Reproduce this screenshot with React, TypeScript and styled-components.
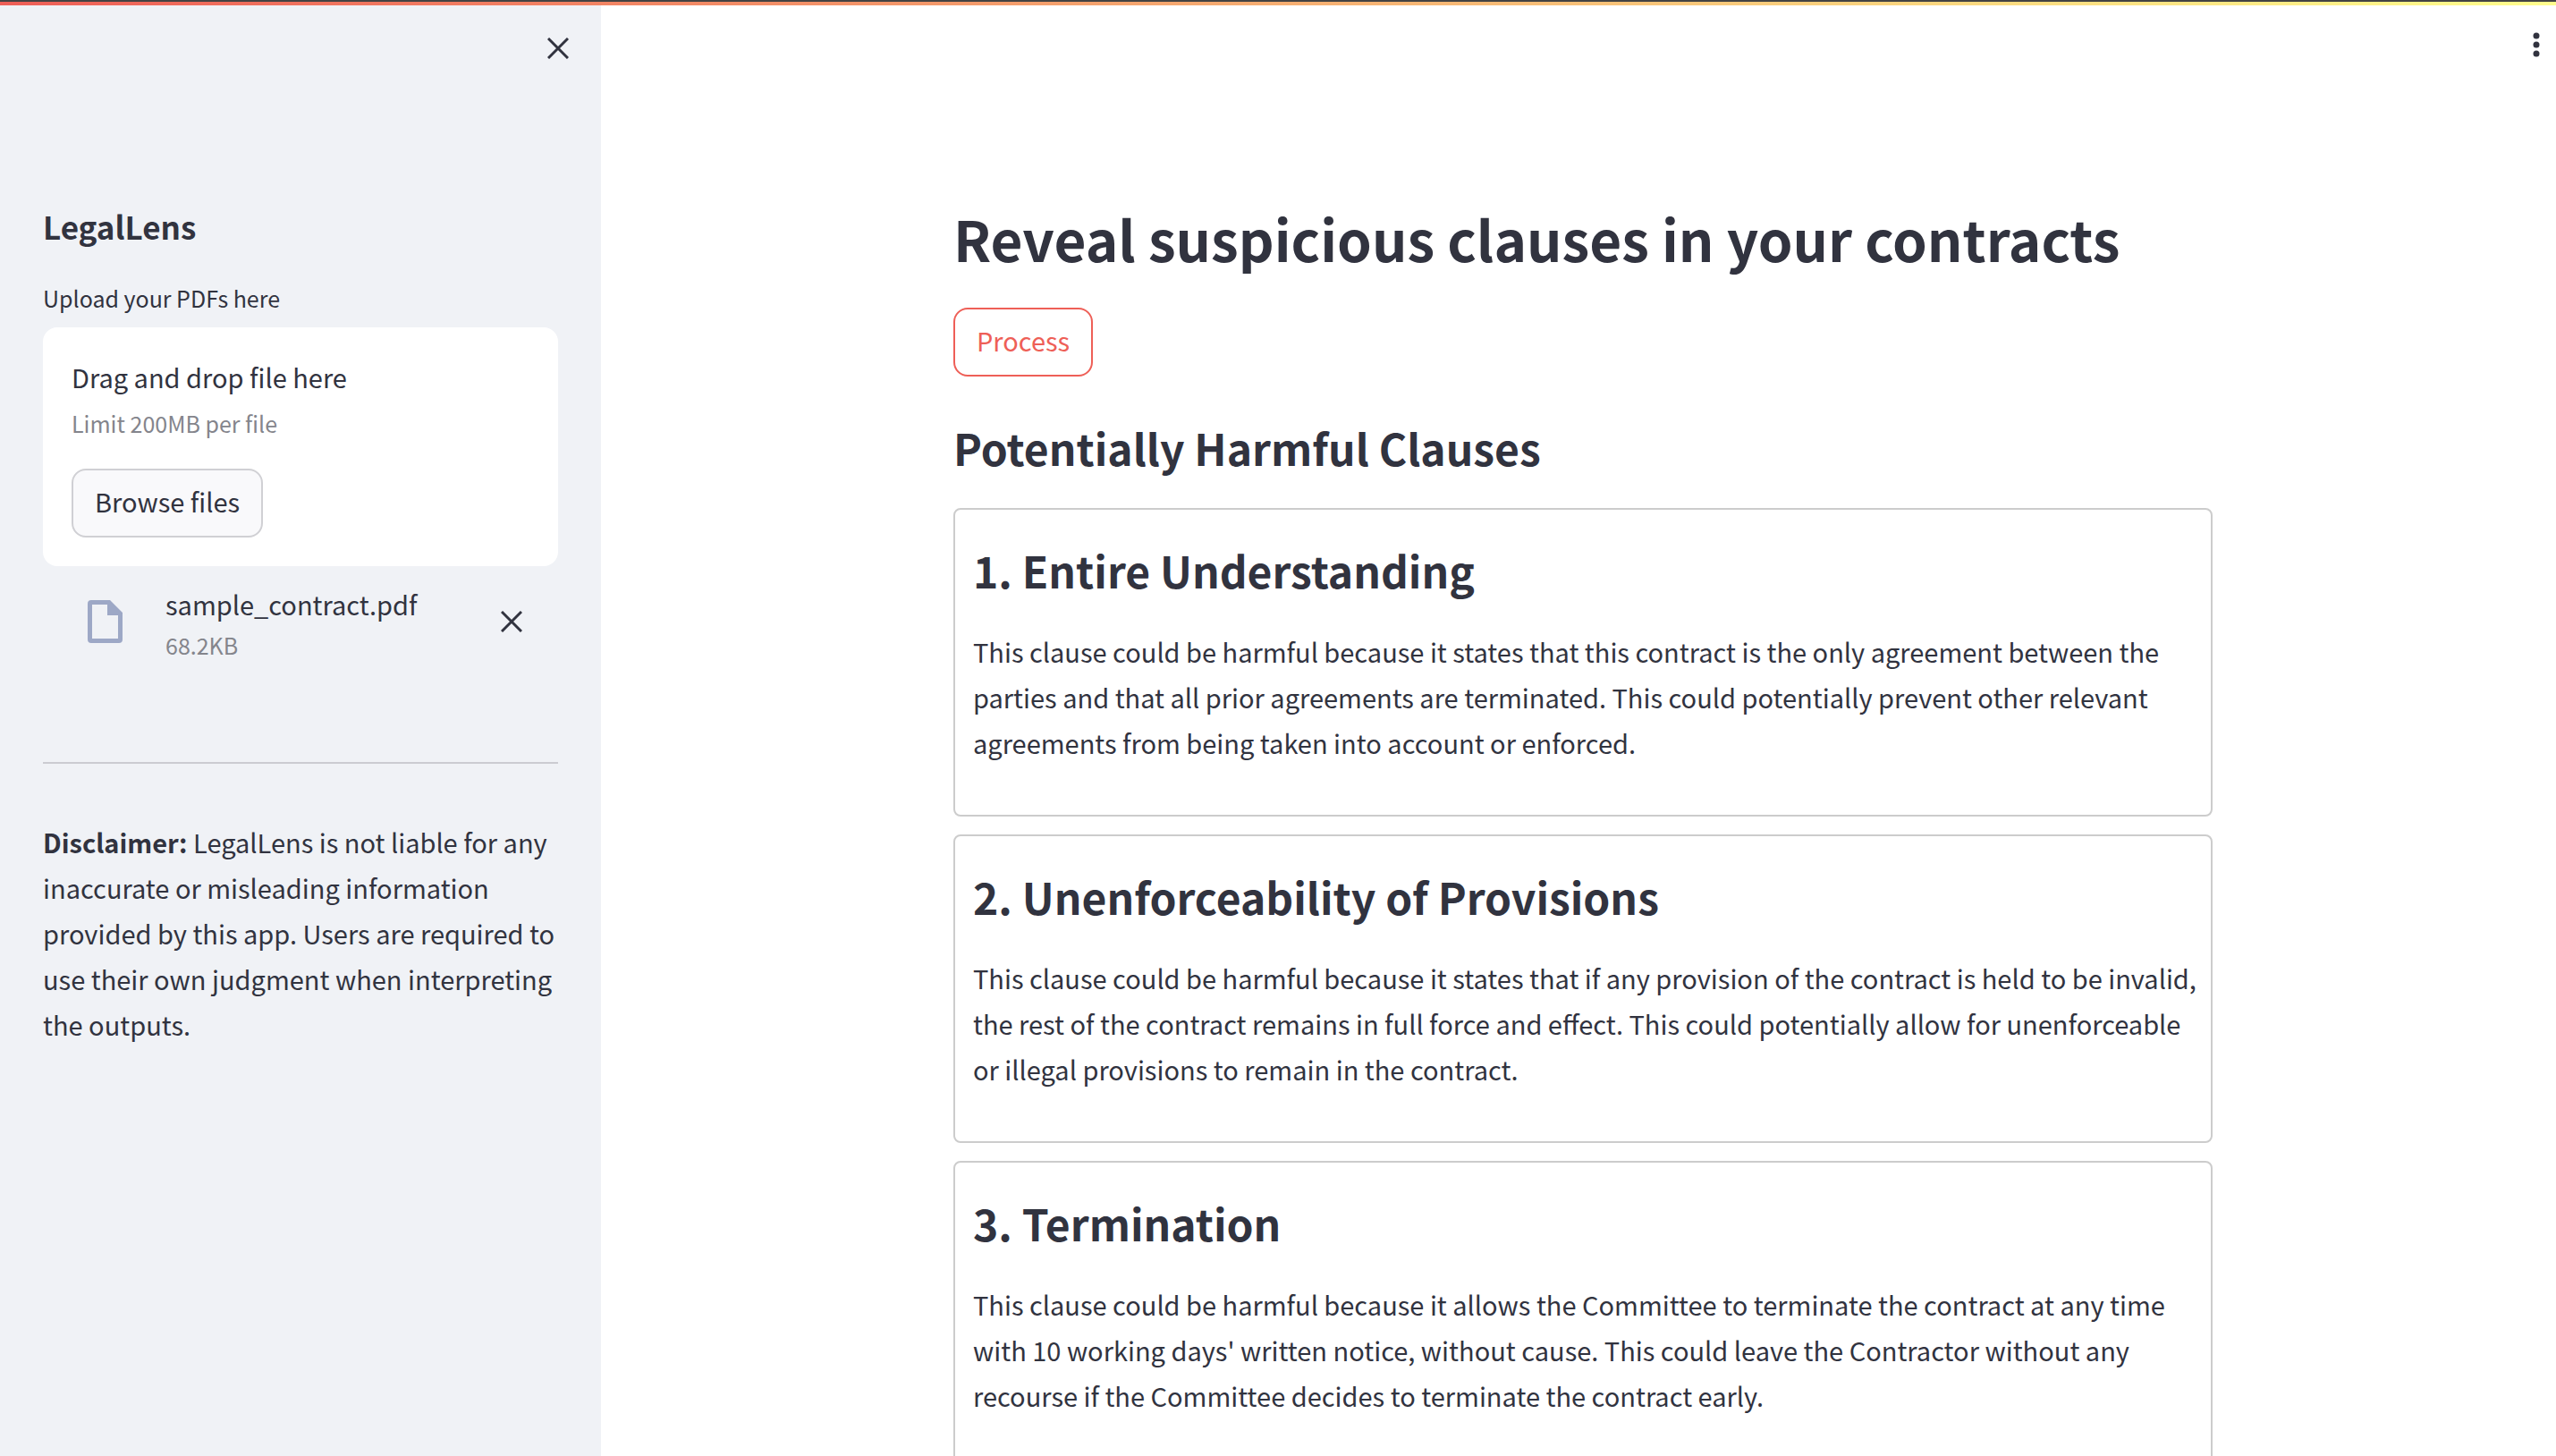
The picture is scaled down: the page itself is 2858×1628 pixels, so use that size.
import React from "react";
import styled, { createGlobalStyle } from "styled-components";

const ink = "#31333f";
const muted = "#84858c";

const GlobalStyle = createGlobalStyle`
  * { box-sizing: border-box; }
  html, body, #root { height: 100%; }
  body {
    margin: 0;
    overflow: hidden;
    background: #ffffff;
    color: ${ink};
    font-family: "Noto Sans CJK SC", "Noto Sans", sans-serif;
    font-size: 29px;
    line-height: 51px;
  }
  h1, h2, h3, p { margin: 0; }
`;

const Page = styled.div`
  display: flex;
  flex-direction: column;
  height: 100vh;
  overflow: hidden;
`;

const Decoration = styled.div`
  flex: none;
  height: 6px;
  border-top: 2px solid #434343;
  background: linear-gradient(90deg, #ee5f57, #fffd8c);
`;

const Columns = styled.div`
  display: flex;
  flex: 1;
  min-height: 0;
`;

const Sidebar = styled.aside`
  display: flex;
  flex-direction: column;
  flex: none;
  width: 672px;
  padding: 36px 48px;
  background: #f0f2f6;
`;

const IconButton = styled.button`
  display: flex;
  flex: none;
  padding: 0;
  border: 0;
  background: none;
  color: ${ink};
  cursor: pointer;
`;

const SidebarTop = styled.div`
  display: flex;
  justify-content: flex-end;
  margin: 0 -12px 163px 0;
`;

const AppName = styled.h3`
  margin-bottom: 38px;
  font-size: 35px;
  line-height: 48px;
  font-weight: 600;
`;

const UploadLabel = styled.label`
  margin-bottom: 15px;
  font-size: 25px;
  line-height: 36px;
`;

const DropZone = styled.section`
  display: flex;
  flex-direction: column;
  align-items: flex-start;
  padding: 30px 32px 32px;
  border-radius: 16px;
  background: #ffffff;
`;

const SmallText = styled.span`
  color: ${muted};
  font-size: 25px;
  line-height: 36px;
`;

const LimitText = styled(SmallText)`
  margin: 8px 0 33px;
`;

const Button = styled.button<{ $tone: "neutral" | "accent" }>`
  display: block;
  height: 77px;
  padding: 9px 24px 13px;
  border: 2px solid ${(p) => (p.$tone === "accent" ? "#ee5f57" : "#d0d0d4")};
  border-radius: 16px;
  background: ${(p) => (p.$tone === "accent" ? "#ffffff" : "#f9f9fb")};
  color: ${(p) => (p.$tone === "accent" ? "#ee5f57" : ink)};
  font: inherit;
  cursor: pointer;
`;

const FileRow = styled.div`
  display: flex;
  align-items: center;
  padding: 17px 40px 0 50px;
`;

const FileText = styled.div`
  display: flex;
  flex: 1;
  flex-direction: column;
  gap: 2px;
  margin-left: 48px;
`;

const Divider = styled.hr`
  width: 100%;
  margin: 113px 0 62px;
  border: 0;
  border-top: 2px solid #cbccd1;
`;

const Main = styled.main`
  flex: 1;
  display: flex;
  flex-direction: column;
  min-width: 0;
`;

const Toolbar = styled.header`
  display: flex;
  justify-content: flex-end;
  padding: 30px 16px 0 0;
`;

const Content = styled.div`
  width: 100%;
  max-width: 1418px;
  margin: 159px auto 0;
  padding-left: 10px;
`;

const Title = styled.h1`
  margin-bottom: 35px;
  font-size: 62px;
  line-height: 86px;
  font-weight: 600;
`;

const Heading = styled.h2`
  font-size: 48px;
  line-height: 60px;
  font-weight: 600;
`;

const SectionHeading = styled(Heading)`
  margin: 49px 0 38px;
`;

const ClauseList = styled.div`
  display: flex;
  flex-direction: column;
  gap: 20px;
`;

const ClauseCard = styled.article`
  display: flex;
  flex-direction: column;
  gap: 36px;
  padding: 37px 12px 55px 20px;
  border: 2px solid #cccccc;
  border-radius: 8px;
`;

const CloseIcon = () => (
  <svg width="24" height="24" viewBox="0 0 24 24" fill="none" stroke="currentColor" strokeWidth="3" aria-hidden="true">
    <path d="M1 1 23 23M23 1 1 23" />
  </svg>
);

const FileIcon = () => (
  <svg width="39" height="48" viewBox="0 0 39 48" fill="#9da8c6" fillRule="evenodd" aria-hidden="true">
    <path d="M4 0H25L39 14V44a4 4 0 0 1-4 4H4a4 4 0 0 1-4-4V4a4 4 0 0 1 4-4ZM5 5V43H34V17H22V5Z" />
  </svg>
);

const MenuIcon = () => (
  <svg width="12" height="28" viewBox="0 0 12 28" fill="currentColor" aria-hidden="true">
    <circle cx="6" cy="4" r="3.5" />
    <circle cx="6" cy="14" r="3.5" />
    <circle cx="6" cy="24" r="3.5" />
  </svg>
);

const clauses = [
  {
    title: "1. Entire Understanding",
    text: "This clause could be harmful because it states that this contract is the only agreement between the parties and that all prior agreements are terminated. This could potentially prevent other relevant agreements from being taken into account or enforced.",
  },
  {
    title: "2. Unenforceability of Provisions",
    text: "This clause could be harmful because it states that if any provision of the contract is held to be invalid, the rest of the contract remains in full force and effect. This could potentially allow for unenforceable or illegal provisions to remain in the contract.",
  },
  {
    title: "3. Termination",
    text: "This clause could be harmful because it allows the Committee to terminate the contract at any time with 10 working days' written notice, without cause. This could leave the Contractor without any recourse if the Committee decides to terminate the contract early.",
  },
];

export default function App() {
  return (
    <>
      <GlobalStyle />
      <Page>
        <Decoration />
        <Columns>
          <Sidebar>
            <SidebarTop>
              <IconButton aria-label="Close sidebar">
                <CloseIcon />
              </IconButton>
            </SidebarTop>
            <AppName>LegalLens</AppName>
            <UploadLabel htmlFor="browse">Upload your PDFs here</UploadLabel>
            <DropZone>
              <span>Drag and drop file here</span>
              <LimitText>Limit 200MB per file</LimitText>
              <Button id="browse" $tone="neutral">Browse files</Button>
            </DropZone>
            <FileRow>
              <FileIcon />
              <FileText>
                <span>sample_contract.pdf</span>
                <SmallText>68.2KB</SmallText>
              </FileText>
              <IconButton aria-label="Remove file">
                <CloseIcon />
              </IconButton>
            </FileRow>
            <Divider />
            <p>
              <strong>Disclaimer:</strong> LegalLens is not liable for any inaccurate or misleading information
              provided by this app. Users are required to use their own judgment when interpreting the outputs.
            </p>
          </Sidebar>
          <Main>
            <Toolbar>
              <IconButton aria-label="Main menu">
                <MenuIcon />
              </IconButton>
            </Toolbar>
            <Content>
              <Title>Reveal suspicious clauses in your contracts</Title>
              <Button $tone="accent">Process</Button>
              <SectionHeading>Potentially Harmful Clauses</SectionHeading>
              <ClauseList>
                {clauses.map((clause) => (
                  <ClauseCard key={clause.title}>
                    <Heading as="h3">{clause.title}</Heading>
                    <p>{clause.text}</p>
                  </ClauseCard>
                ))}
              </ClauseList>
            </Content>
          </Main>
        </Columns>
      </Page>
    </>
  );
}
